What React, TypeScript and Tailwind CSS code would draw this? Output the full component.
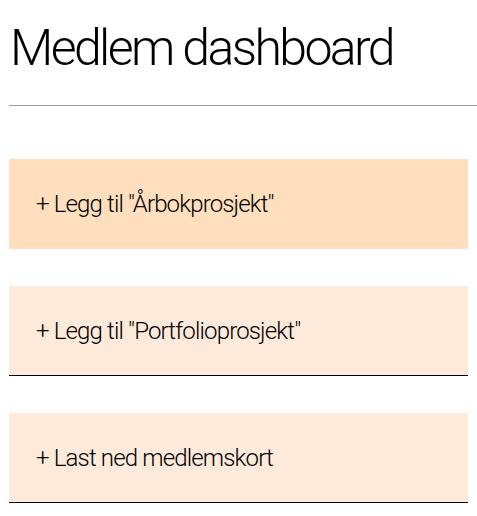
export default function App() {
  const items = [
    { label: '+ Legg til "Årbokprosjekt"', bg: "bg-[#ffdfbd]", border: "border-[#ffdfbd]" },
    { label: '+ Legg til "Portfolioprosjekt"', bg: "bg-[#fdeadb]", border: "border-black" },
    { label: "+ Last ned medlemskort", bg: "bg-[#fdeadb]", border: "border-black" },
  ];
  return (
    <div className="min-h-[516px] bg-white pl-[9px] text-black" style={{ fontFamily: "Roboto, 'Liberation Sans', sans-serif" }}>
      <h1 className="pt-[18px] pl-[1px] text-[50px] leading-[60px] font-light tracking-[-0.052em]">Medlem dashboard</h1>
      <div className="mt-[27px] h-px bg-[#9a9a9a]" />
      <div className="mt-[53px] mr-[9px] flex flex-col gap-[37px]">
        {items.map((it) => (
          <div key={it.label} className={`flex h-[90px] items-center border-b ${it.border} ${it.bg} pl-[27px]`}>
            <span className="pt-[1px] text-[24px] font-light tracking-[-0.035em] text-black">{it.label}</span>
          </div>
        ))}
      </div>
    </div>
  );
}
